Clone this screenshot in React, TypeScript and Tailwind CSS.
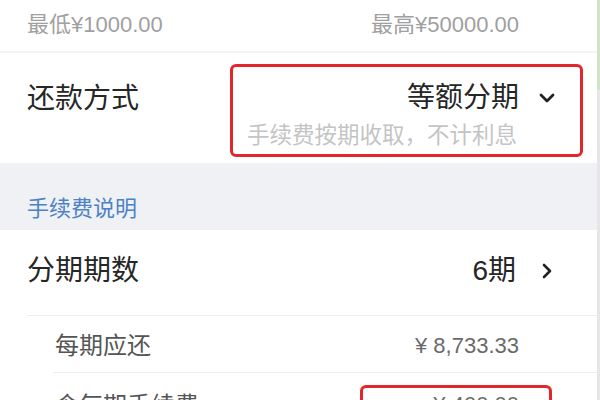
import React from "react";

const font = { fontFamily: '"Liberation Sans", "Noto Sans CJK SC", sans-serif' };

function ChevronDown() {
  return (
    <svg width="16" height="10" viewBox="0 0 16 10" fill="none">
      <path d="M2 2l6 6 6-6" stroke="#222" strokeWidth="2.8" strokeLinecap="round" strokeLinejoin="round" />
    </svg>
  );
}

function ChevronRight() {
  return (
    <svg width="10" height="16" viewBox="0 0 10 16" fill="none">
      <path d="M2 2l6 6-6 6" stroke="#222" strokeWidth="2.6" strokeLinecap="round" strokeLinejoin="round" />
    </svg>
  );
}

export default function App() {
  return (
    <div className="w-[600px] h-[400px] overflow-hidden flex bg-white" style={font}>
      <div className="flex-1 flex flex-col">
        {/* amount range */}
        <div className="h-[53px] shrink-0 flex items-start justify-between pl-[27px] pr-[78px] pt-[11px] border-b-2 border-[#f3f3f3] text-[22px] leading-[28px] text-[#a0a0a0]">
          <span>最低¥1000.00</span>
          <span>最高¥50000.00</span>
        </div>

        {/* repayment method */}
        <div className="h-[110px] shrink-0 flex items-start pl-[27px] pr-[14px] pt-[11px]">
          <span className="mt-[17px] text-[28px] leading-[36px] text-[#262626]">还款方式</span>
          <div className="ml-auto w-[353px] h-[93px] border-[3px] border-[#e3262b] rounded-[6px] flex flex-col items-end pt-[13px] pr-[25px]">
            <div className="flex items-center gap-[20px]">
              <span className="text-[28px] leading-[36px] text-[#262626]">等额分期</span>
              <ChevronDown />
            </div>
            <span className="mt-[6px] mr-[38px] text-[22.5px] leading-[28px] text-[#c4c4c4]">手续费按期收取，不计利息</span>
          </div>
        </div>

        {/* section header */}
        <div className="h-[67px] shrink-0 bg-[#eff1f4] flex items-center pl-[27px] pt-[24px]">
          <span className="text-[22px] leading-[28px] text-[#4d82c6]">手续费说明</span>
        </div>

        {/* installments */}
        <div className="h-[85px] shrink-0 flex items-start justify-between pl-[27px] pr-[45px] pt-[23px]">
          <span className="text-[28px] leading-[36px] text-[#262626]">分期期数</span>
          <div className="flex items-center gap-[26px]">
            <span className="text-[28px] leading-[36px] text-[#262626]">6期</span>
            <ChevronRight />
          </div>
        </div>

        <div className="ml-[27px] border-t border-[#ededed]">
          <div className="h-[56px] flex items-start justify-between pl-[28px] pr-[78px] pt-[15px]">
            <span className="text-[24px] leading-[30px] text-[#555]">每期应还</span>
            <span className="text-[22px] leading-[30px] text-[#6a6a6a]">¥ 8,733.33</span>
          </div>
        </div>

        <div className="ml-[53px] border-t border-[#ededed]">
          <div className="flex items-start justify-between pl-[2px] pr-[45px] pt-[12px]">
            <span className="mt-[6px] text-[24px] leading-[30px] text-[#555]">含每期手续费</span>
            <div className="w-[192px] h-[50px] border-[3px] border-[#e3262b] rounded-[6px] flex justify-end pr-[30px] pt-[2px]">
              <span className="text-[22px] leading-[30px] text-[#6a6a6a]">¥ 400.00</span>
            </div>
          </div>
        </div>
      </div>

      {/* right edge strip */}
      <div className="w-[3px] flex flex-col">
        <div className="h-[90px] bg-[#cfe6c6]" />
        <div className="flex-1 bg-[#e6e6e6]" />
      </div>
    </div>
  );
}
